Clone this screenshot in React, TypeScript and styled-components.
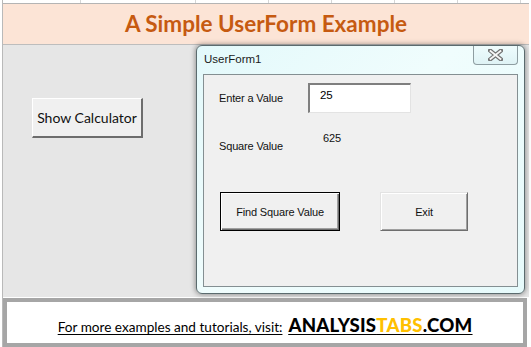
import React from "react";
import styled, { createGlobalStyle, css } from "styled-components";

const GlobalStyle = createGlobalStyle`
  html, body {
    margin: 0;
    padding: 0;
    background: #ffffff;
  }
`;

const Sheet = styled.div`
  width: 531px;
  height: 347px;
  overflow: hidden;
  background: #ffffff;
  display: flex;
  flex-direction: column;
  padding-left: 2px;
  box-sizing: border-box;
`;

const Content = styled.div`
  width: 526px;
  display: flex;
  flex-direction: column;
  border-left: 1px solid #b9b9b9;
`;

const GridStrip = styled.div`
  height: 3px;
  display: flex;
`;

const GridCell = styled.div<{ w: number }>`
  width: ${(p) => p.w}px;
  flex-shrink: 0;
  border-right: 1px solid #d6d6d6;
  box-sizing: border-box;
`;

const TitleBand = styled.div`
  height: 39px;
  background: #fce4d6;
  border-top: 1px solid #b4b4b4;
  border-bottom: 1px solid #bdbdbd;
  display: flex;
  align-items: center;
  justify-content: center;
  font-family: Lato, "Open Sans", sans-serif;
  font-weight: 700;
  font-size: 22.5px;
  color: #c65a11;
  padding-bottom: 1px;
`;

const Desk = styled.div`
  height: 252px;
  background: #e6e6e6;
  display: flex;
  align-items: flex-start;
  padding-left: 29px;
`;

const SheetButton = styled.div`
  margin-top: 53px;
  width: 111px;
  height: 40px;
  box-sizing: border-box;
  background: #f0f0f0;
  border-top: 1px solid #ffffff;
  border-left: 1px solid #ffffff;
  border-right: 2px solid #6d6d6d;
  border-bottom: 2px solid #6d6d6d;
  display: flex;
  align-items: center;
  justify-content: center;
  font-family: Lato, "Open Sans", sans-serif;
  font-size: 14px;
  color: #111111;
`;

const Window = styled.div`
  margin-left: 53px;
  width: 329px;
  height: 249px;
  box-sizing: border-box;
  border: 1px solid #5b6b6e;
  border-radius: 6px;
  background: linear-gradient(135deg, #e3f9fb 0%, #f0fdfd 45%, #e6fafb 100%);
  box-shadow: 0 0 5px 1px rgba(0, 0, 0, 0.35);
  display: flex;
  flex-direction: column;
  padding: 0 6px 6px 6px;
`;

const TitleBar = styled.div`
  height: 28px;
  display: flex;
  align-items: flex-start;
  justify-content: space-between;
`;

const Caption = styled.div`
  margin-top: 7px;
  margin-left: 1px;
  font-family: "Liberation Sans", Arial, sans-serif;
  font-size: 11.5px;
  color: #1a1a1a;
`;

const CloseButton = styled.div`
  width: 45px;
  height: 19px;
  box-sizing: border-box;
  border: 1px solid #8e9da1;
  border-top: none;
  border-radius: 0 0 4px 4px;
  background: linear-gradient(180deg, #eefcfd, #dff3f5);
  display: flex;
  align-items: center;
  justify-content: center;
`;

const Panel = styled.div`
  flex: 1;
  box-sizing: border-box;
  border: 1px solid #848f92;
  background: #f0f0f0;
  padding: 8px 0 0 15px;
  display: flex;
  flex-direction: column;
  font-family: "Liberation Sans", Arial, sans-serif;
  font-size: 11px;
  letter-spacing: -0.15px;
  color: #111111;
`;

const Row = styled.div`
  display: flex;
  align-items: center;
`;

const ValueRow = styled(Row)`
  margin-top: 19px;
`;

const Label = styled.div<{ w: number; drop?: number }>`
  width: ${(p) => p.w}px;
  flex-shrink: 0;
  ${(p) =>
    p.drop &&
    css`
      align-self: flex-start;
      padding-top: ${p.drop}px;
    `}
`;

const TextBox = styled.div`
  width: 103px;
  height: 30px;
  box-sizing: border-box;
  background: #ffffff;
  border-top: 2px solid #7f7f7f;
  border-left: 2px solid #7f7f7f;
  border-right: 1px solid #e3e3e3;
  border-bottom: 1px solid #e3e3e3;
  padding: 4px 0 0 10px;
  font-size: 11.5px;
  color: #000000;
`;

const Value = styled.div`
  align-self: flex-start;
`;

const ButtonRow = styled(Row)`
  margin-top: 40px;
  margin-left: 1px;
  gap: 40px;
`;

const FormButton = styled.div<{ w: number; primary?: boolean }>`
  width: ${(p) => p.w}px;
  height: 39px;
  box-sizing: border-box;
  background: #f0f0f0;
  display: flex;
  align-items: center;
  justify-content: center;
  ${(p) =>
    p.primary
      ? css`
          border: 1px solid #000000;
          box-shadow: inset 1px 1px 0 #ffffff, inset -1px -1px 0 #6e6e6e,
            inset -2px -2px 0 #a0a0a0;
        `
      : css`
          border-top: 1px solid #e3e3e3;
          border-left: 1px solid #e3e3e3;
          border-right: 1px solid #6e6e6e;
          border-bottom: 1px solid #6e6e6e;
          box-shadow: inset 1px 1px 0 #ffffff, inset -1px -1px 0 #a0a0a0;
        `}
`;

const FooterBox = styled.div`
  margin-top: 1px;
  width: 524px;
  height: 49px;
  box-sizing: border-box;
  border: 4px solid #a6a6a6;
  background: #ffffff;
  display: flex;
  align-items: flex-end;
  justify-content: center;
  padding-bottom: 7px;
`;

const FooterLink = styled.div`
  display: flex;
  align-items: baseline;
  gap: 6px;
  text-decoration: underline;
  text-underline-offset: 2px;
  color: #000000;
`;

const FooterText = styled.span`
  font-family: Lato, "Open Sans", sans-serif;
  font-size: 13.6px;
`;

const Brand = styled.span<{ accent?: boolean }>`
  font-family: Lato, "Open Sans", sans-serif;
  font-weight: 900;
  font-size: 18.6px;
  letter-spacing: 0.2px;
  color: ${(p) => (p.accent ? "#ffc000" : "#000000")};
`;

const BrandWrap = styled.span`
  text-decoration: underline;
  text-underline-offset: 2px;
`;

function CloseGlyph() {
  return (
    <svg width="15" height="12" viewBox="0 0 15 12">
      <path d="M2 1.5 L13 10.5 M13 1.5 L2 10.5" stroke="#727272" strokeWidth="4.2" strokeLinecap="square" />
      <path d="M2.5 2 L12.5 10 M12.5 2 L2.5 10" stroke="#f6f6f6" strokeWidth="1.8" strokeLinecap="square" />
    </svg>
  );
}

export default function App() {
  const cells = [78, 115, 73, 63, 63, 63, 63];
  return (
    <>
      <GlobalStyle />
      <Sheet>
        <Content>
          <GridStrip>
            {cells.map((w, i) => (
              <GridCell key={i} w={w} />
            ))}
          </GridStrip>
          <TitleBand>A Simple UserForm Example</TitleBand>
          <Desk>
            <SheetButton>Show Calculator</SheetButton>
            <Window>
              <TitleBar>
                <Caption>UserForm1</Caption>
                <CloseButton>
                  <CloseGlyph />
                </CloseButton>
              </TitleBar>
              <Panel>
                <Row>
                  <Label w={89}>Enter a Value</Label>
                  <TextBox>25</TextBox>
                </Row>
                <ValueRow>
                  <Label w={104} drop={8}>
                    Square Value
                  </Label>
                  <Value>625</Value>
                </ValueRow>
                <ButtonRow>
                  <FormButton w={120} primary>
                    Find Square Value
                  </FormButton>
                  <FormButton w={88}>Exit</FormButton>
                </ButtonRow>
              </Panel>
            </Window>
          </Desk>
          <FooterBox>
            <FooterLink>
              <FooterText>For more examples and tutorials, visit:</FooterText>
              <BrandWrap>
                <Brand>ANALYSIS</Brand>
                <Brand accent>TABS</Brand>
                <Brand>.COM</Brand>
              </BrandWrap>
            </FooterLink>
          </FooterBox>
        </Content>
      </Sheet>
    </>
  );
}
